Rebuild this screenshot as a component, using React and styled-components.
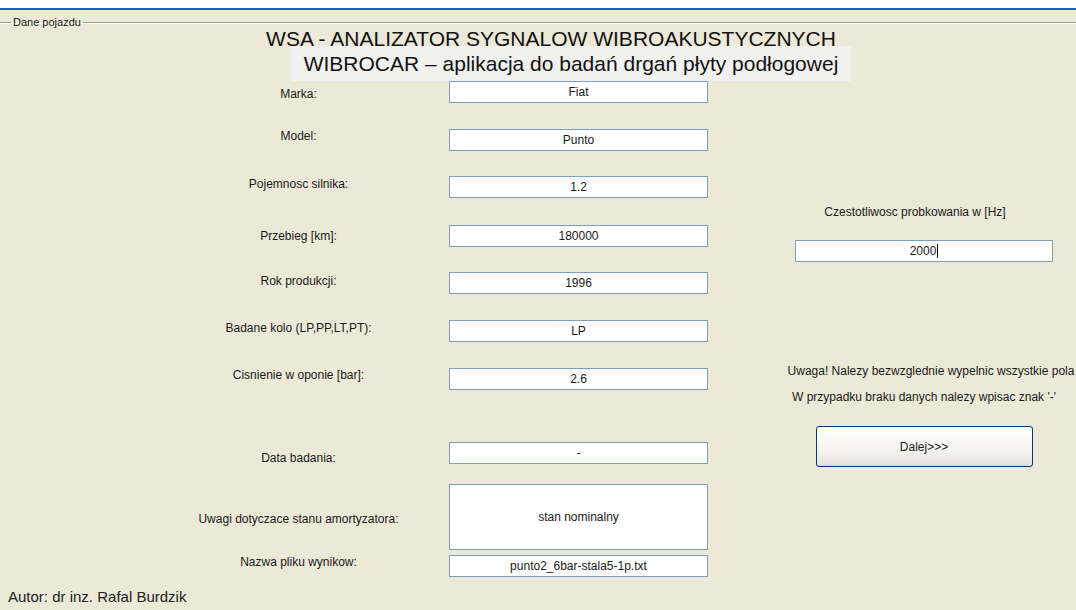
import React from "react"
import styled, { createGlobalStyle } from "styled-components"

const GlobalStyle = createGlobalStyle`
  html, body {
    margin: 0;
    padding: 0;
    background: #ece9d8;
  }
  body {
    font-family: "Liberation Sans", Arial, sans-serif;
    color: #1a1a1a;
  }
`

const Window = styled.div`
  width: 1076px;
  height: 610px;
  overflow: hidden;
  background: #ece9d8;
`

// white strip with the blue edge of the title bar above the panel
const TopStrip = styled.div`
  height: 8px;
  background: #ffffff;
  border-bottom: 2px solid #1f55de;
`

const Group = styled.fieldset`
  margin: 6px 0 0 0;
  padding: 0;
  border: 0;
  border-top: 1px solid #9a9a92;
  box-shadow: inset 0 1px 0 #ffffff;
  min-width: 0;
`

const Legend = styled.legend`
  margin-left: 11px;
  padding: 0 2px;
  font-size: 11px;
  line-height: 13px;
  color: #1a1a1a;
`

const Title = styled.h1`
  margin: 3px 0 0 0;
  padding-left: 26px;
  text-align: center;
  font-size: 21px;
  line-height: 14px;
  font-weight: normal;
  color: #111;
  white-space: nowrap;
`

const Subtitle = styled.div`
  margin: 0 0 0 291px;
  width: 560px;
  height: 35px;
  background: #f1f1f0;
  display: flex;
  align-items: center;
  justify-content: center;
  font-size: 21px;
  color: #111;
  white-space: nowrap;
`

const Body = styled.div`
  display: grid;
  grid-template-columns: 708px 258px;
  column-gap: 87px;
  align-items: start;
`

const FieldList = styled.div`
  display: flex;
  flex-direction: column;
`

const Row = styled.div`
  display: grid;
  grid-template-columns: 255px 259px;
  column-gap: 23px;
  margin-left: 171px;
  margin-top: ${p => p.$gap}px;
`

const Label = styled.div`
  padding-top: ${p => p.$dy}px;
  text-align: center;
  font-size: 12px;
  line-height: 14px;
  white-space: nowrap;
`

const Edit = styled.div`
  box-sizing: border-box;
  height: ${p => p.$h || 22}px;
  background: #ffffff;
  border: 1px solid #7f9db9;
  display: flex;
  align-items: center;
  justify-content: center;
  font-size: 12px;
  white-space: nowrap;
`

const Caret = styled.span`
  display: inline-block;
  width: 1px;
  height: 14px;
  margin-left: 1px;
  background: #000;
`

const SidePanel = styled.div`
  display: flex;
  flex-direction: column;
  align-items: center;
`

const Note = styled.div`
  margin-top: ${p => p.$gap}px;
  transform: translateX(${p => p.$dx || 0}px);
  font-size: 12px;
  line-height: 14px;
  white-space: nowrap;
`

const SideEdit = styled(Edit)`
  width: 258px;
  margin-top: ${p => p.$gap}px;
`

const Button = styled.button`
  margin-top: ${p => p.$gap}px;
  width: 217px;
  height: 41px;
  border: 1px solid #003c74;
  border-radius: 3px;
  background: linear-gradient(#ffffff 0%, #f5f4ef 60%, #e3e1d8 100%);
  box-shadow: inset 0 -1px 0 #d6d0c5;
  font-family: "Liberation Sans", Arial, sans-serif;
  font-size: 12px;
  color: #1a1a1a;
`

const Author = styled.div`
  margin-top: 12px;
  padding-left: 8px;
  font-size: 15px;
  line-height: 16px;
  color: #222;
`

const fields = [
  { label: "Marka:", value: "Fiat", gap: 0, dy: 6 },
  { label: "Model:", value: "Punto", gap: 26, dy: 0 },
  { label: "Pojemnosc silnika:", value: "1.2", gap: 25, dy: 1 },
  { label: "Przebieg [km]:", value: "180000", gap: 27, dy: 4 },
  { label: "Rok produkcji:", value: "1996", gap: 25, dy: 2 },
  { label: "Badane kolo (LP,PP,LT,PT):", value: "LP", gap: 26, dy: 1 },
  { label: "Cisnienie w oponie [bar]:", value: "2.6", gap: 26, dy: 0 },
  { label: "Data badania:", value: "-", gap: 52, dy: 9 },
  { label: "Uwagi dotyczace stanu amortyzatora:", value: "stan nominalny", gap: 19, dy: 28, h: 66 },
  { label: "Nazwa pliku wynikow:", value: "punto2_6bar-stala5-1p.txt", gap: 5, dy: 0 },
]

const App = () => (
  <Window>
    <GlobalStyle />
    <TopStrip />
    <Group>
      <Legend>Dane pojazdu</Legend>
      <Title>WSA - ANALIZATOR SYGNALOW WIBROAKUSTYCZNYCH</Title>
      <Subtitle>WIBROCAR – aplikacja do badań drgań płyty podłogowej</Subtitle>

      <Body>
        <FieldList>
          {fields.map(f => (
            <Row key={f.label} $gap={f.gap}>
              <Label $dy={f.dy}>{f.label}</Label>
              <Edit $h={f.h}>{f.value}</Edit>
            </Row>
          ))}
        </FieldList>

        <SidePanel>
          <Note $gap={124} $dx={-9}>Czestotliwosc probkowania w [Hz]</Note>
          <SideEdit $gap={21}>
            2000<Caret />
          </SideEdit>
          <Note $gap={102} $dx={7}>Uwaga! Nalezy bezwzglednie wypelnic wszystkie pola</Note>
          <Note $gap={12}>W przypadku braku danych nalezy wpisac znak '-'</Note>
          <Button $gap={22}>Dalej&gt;&gt;&gt;</Button>
        </SidePanel>
      </Body>

      <Author>Autor: dr inz. Rafal Burdzik</Author>
    </Group>
  </Window>
)

export default App
